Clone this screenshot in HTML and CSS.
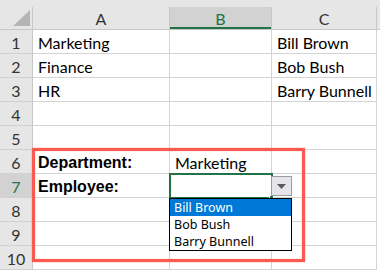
FILE: index.html
```
<!DOCTYPE html>
<html>
<head>
<meta charset="utf-8">
<link rel="stylesheet" href="styles.css">
</head>
<body>
<div class="wrap">
  <div class="sheet">
    <div class="hd corner"><span><svg class="tri" width="17" height="16" viewBox="0 0 17 16"><polygon points="17,0 17,16 0,16" fill="#b5b5b5"/></svg></span></div>
    <div class="hd"><span>A</span></div>
    <div class="hd sel"><span>B</span></div>
    <div class="hd"><span>C</span></div>
    <div class="hd end"><span></span></div>

    <div class="rh">1</div><div class="c">Marketing</div><div class="c"></div><div class="c">Bill Brown</div><div class="e"></div>
    <div class="rh">2</div><div class="c">Finance</div><div class="c"></div><div class="c">Bob Bush</div><div class="e"></div>
    <div class="rh">3</div><div class="c">HR</div><div class="c"></div><div class="c">Barry Bunnell</div><div class="e"></div>
    <div class="rh">4</div><div class="c"></div><div class="c"></div><div class="c"></div><div class="e"></div>
    <div class="rh">5</div><div class="c"></div><div class="c"></div><div class="c"></div><div class="e"></div>
    <div class="rh">6</div><div class="c b">Department:</div><div class="c">Marketing</div><div class="c"></div><div class="e"></div>
    <div class="rh rsel">7</div><div class="c b">Employee:</div>
    <div class="c active">
      <div class="handle"></div>
      <div class="ddbtn"><svg width="9" height="5" viewBox="0 0 9 5"><polygon points="0,0 9,0 4.5,5" fill="#5a5a5a"/></svg></div>
      <div class="list">
        <div class="item hi">Bill Brown</div>
        <div class="item">Bob Bush</div>
        <div class="item">Barry Bunnell</div>
      </div>
    </div>
    <div class="c"></div><div class="e"></div>
    <div class="rh">8</div><div class="c"></div><div class="c"></div><div class="c"></div><div class="e"></div>
    <div class="rh">9</div><div class="c"></div><div class="c"></div><div class="c"></div><div class="e"></div>
    <div class="rh">10</div><div class="c"></div><div class="c"></div><div class="c"></div><div class="e"></div>
  </div>
  <div class="redbox"></div>
</div>
</body>
</html>
```

FILE: styles.css
```
html, body {
  margin: 0;
  padding: 0;
  background: #fff;
}
body {
  width: 380px;
  height: 270px;
  overflow: hidden;
  font-family: Lato, "Liberation Sans", sans-serif;
}
.wrap {
  position: relative;
  width: 380px;
  height: 270px;
}
.sheet {
  display: grid;
  grid-template-columns: 33px 137px 102px 105px 3px;
  grid-template-rows: 30px repeat(10, 24px);
}
.hd {
  background: #e6e6e6;
  padding-top: 7px;
  box-sizing: border-box;
  border-bottom: 1px solid #c8c8c8;
  display: flex;
}
.hd > span {
  flex: 1;
  display: flex;
  align-items: center;
  justify-content: center;
  border-right: 1px solid #c8c8c8;
  font-size: 16px;
  color: #333;
  padding-top: 1px;
}
.hd.end > span { border-right: none; }
.hd.sel > span {
  background: #d2d2d2;
  color: #217346;
  box-shadow: inset 0 -2px 0 #217346;
}
.corner > span {
  align-items: flex-end;
  justify-content: flex-end;
  padding: 0 2px 3px 0;
}
.tri { display: block; }
.rh {
  background: #e6e6e6;
  border-right: 1px solid #c8c8c8;
  border-bottom: 1px solid #d0d0d0;
  display: flex;
  align-items: center;
  justify-content: center;
  font-size: 16px;
  color: #333;
  padding-top: 2px;
  box-sizing: border-box;
}
.rh.rsel {
  background: #d2d2d2;
  color: #217346;
}
.c {
  border-right: 1px solid #d4d4d4;
  border-bottom: 1px solid #d4d4d4;
  display: flex;
  align-items: center;
  padding: 2px 0 0 5px;
  box-sizing: border-box;
  font-size: 16px;
  color: #000;
  white-space: nowrap;
}
.c.b {
  font-family: "Liberation Sans", Arial, sans-serif;
  font-weight: bold;
  font-size: 16px;
}
.e { background: #fff; }
.active {
  position: relative;
  outline: 2px solid #217346;
  outline-offset: -1px;
  z-index: 2;
}
.handle {
  position: absolute;
  right: -3px;
  bottom: -3px;
  width: 5px;
  height: 5px;
  background: #217346;
  border: 1px solid #fff;
  box-sizing: border-box;
}
.ddbtn {
  position: absolute;
  left: 101px;
  top: 2px;
  width: 21px;
  height: 20px;
  box-sizing: border-box;
  background: #e4e4ea;
  border: 1px solid #9c9ca4;
  display: flex;
  align-items: center;
  justify-content: center;
}
.list {
  position: absolute;
  left: -1px;
  top: 24px;
  width: 123px;
  height: 53px;
  box-sizing: border-box;
  background: #fff;
  border: 1px solid #000;
  font-family: "Noto Sans", "Open Sans", sans-serif;
  font-size: 12.5px;
  color: #000;
}
.item {
  height: 17px;
  line-height: 17px;
  padding-left: 4px;
  white-space: nowrap;
}
.item.hi {
  background: #0078d7;
  color: #fff;
}
.redbox {
  position: absolute;
  left: 32px;
  top: 148px;
  width: 273px;
  height: 114px;
  box-sizing: border-box;
  border: 3px solid #fb5a50;
  box-shadow: 0 0 1px #fb5a50, inset 0 0 1px #fb5a50;
  z-index: 3;
  pointer-events: none;
}
```
